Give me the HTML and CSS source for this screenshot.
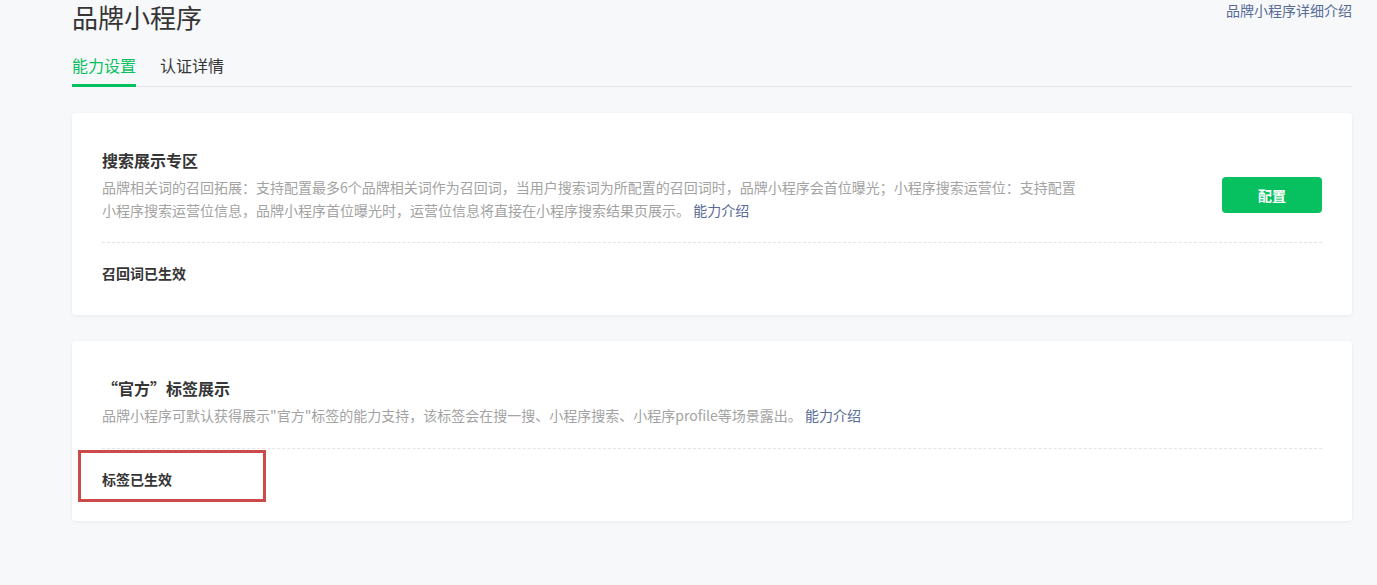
FILE: index.html
```html
<!DOCTYPE html>
<html>
<head>
    <meta charset="utf-8">
    <title>品牌小程序</title>
    <link rel="stylesheet" href="styles.css">
</head>
<body>
    <div class="page">
        <div class="page-head">
            <h1 class="page-title">品牌小程序</h1>
            <a class="head-link" href="#">品牌小程序详细介绍</a>
        </div>
        <div class="tabs">
            <div class="tab active">能力设置</div>
            <div class="tab">认证详情</div>
        </div>

        <div class="card">
            <div class="card-head">
                <div class="card-info">
                    <h3 class="card-title">搜索展示专区</h3>
                    <p class="card-desc">品牌相关词的召回拓展：支持配置最多6个品牌相关词作为召回词，当用户搜索词为所配置的召回词时，品牌小程序会首位曝光；小程序搜索运营位：支持配置小程序搜索运营位信息，品牌小程序首位曝光时，运营位信息将直接在小程序搜索结果页展示。 <a class="link" href="#">能力介绍</a></p>
                </div>
                <button class="btn-primary">配置</button>
            </div>
            <div class="card-foot">
                <div class="status">召回词已生效</div>
            </div>
        </div>

        <div class="card">
            <div class="card-head">
                <div class="card-info">
                    <h3 class="card-title">“官方”标签展示</h3>
                    <p class="card-desc">品牌小程序可默认获得展示"官方"标签的能力支持，该标签会在搜一搜、小程序搜索、小程序profile等场景露出。 <a class="link" href="#">能力介绍</a></p>
                </div>
            </div>
            <div class="card-foot">
                <div class="status">标签已生效</div>
                <div class="mark"></div>
            </div>
        </div>
    </div>
</body>
</html>
```

FILE: styles.css
```css
body {
    margin: 0;
    background-color: #f6f8f9;
    font-family: "Noto Sans CJK SC", "Noto Sans", sans-serif;
    color: #353535;
}

.page {
    padding: 0 25px 40px 72px;
}

.page-head {
    display: flex;
    justify-content: space-between;
    align-items: flex-start;
}

.page-title {
    margin: 0;
    font-size: 26px;
    font-weight: normal;
    line-height: 34px;
}

.head-link {
    font-size: 14px;
    line-height: 20px;
    color: #576b95;
    text-decoration: none;
}

.tabs {
    display: flex;
    gap: 24px;
    margin-top: 19px;
    border-bottom: 1px solid #e2e4e6;
}

.tab {
    font-size: 16px;
    line-height: 24px;
    padding-bottom: 7px;
    border-bottom: 3px solid transparent;
    margin-bottom: -1px;
}

.tab.active {
    color: #07c160;
    border-bottom-color: #07c160;
}

.card {
    margin-top: 26px;
    background: #fff;
    border-radius: 4px;
    box-shadow: 0 1px 4px rgba(0, 0, 0, 0.06);
    padding: 0 30px;
}

.card + .card {
    margin-top: 26px;
}

.card-head {
    display: flex;
    justify-content: space-between;
    align-items: flex-start;
    padding: 35px 0 20px;
    border-bottom: 1px dashed #e4e4e4;
}

.card + .card .card-head {
    padding-bottom: 21px;
}

.card-info {
    max-width: 975px;
}

.card-title {
    margin: 0 0 4px;
    font-size: 16px;
    font-weight: bold;
    line-height: 24px;
}

.card-desc {
    margin: 0;
    font-size: 14px;
    line-height: 23px;
    color: #a3a3a3;
}

.link {
    color: #576b95;
    text-decoration: none;
}

.btn-primary {
    margin-top: 29px;
    width: 100px;
    height: 36px;
    border: none;
    border-radius: 4px;
    background: #07c160;
    color: #fff;
    font-family: inherit;
    font-size: 14px;
    font-weight: bold;
    cursor: pointer;
}

.card-foot {
    position: relative;
    padding: 18px 0 30px;
}

.status {
    font-size: 14px;
    font-weight: bold;
    line-height: 24px;
}

.mark {
    position: absolute;
    left: -24px;
    top: 1px;
    width: 182px;
    height: 46px;
    border: 3px solid #cc4a4a;
}
```
